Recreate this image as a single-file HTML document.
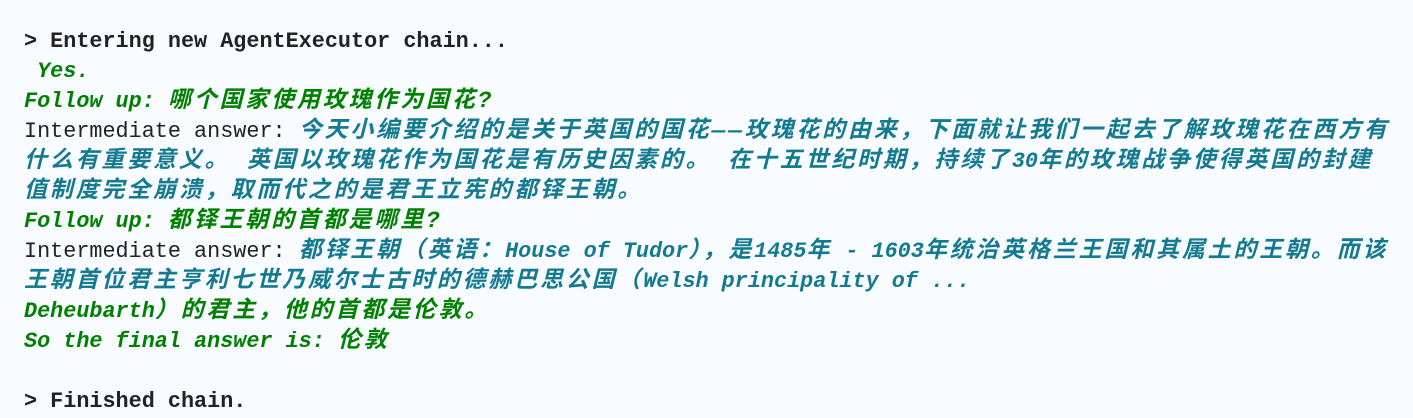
<!DOCTYPE html>
<html><head><meta charset="utf-8"><style>
body{margin:0;background:#f8fbff;width:1413px;height:418px;overflow:hidden}
pre{margin:0;position:absolute;left:24px;top:27px;font-family:"Liberation Mono","Noto Sans CJK SC",monospace;font-size:21.8px;line-height:30px;color:#222;white-space:pre}
.l{display:block;height:30px;line-height:30px;overflow:visible}
.b{font-weight:bold}
.g{color:#008000;font-weight:bold;font-style:italic}
.t{color:#137a90;font-weight:bold;font-style:italic}
.c{font-size:23px;letter-spacing:2.8px;line-height:10px}
</style></head><body><pre><span class="l b">&gt; Entering new AgentExecutor chain...</span><span class="l g"> Yes.</span><span class="l g">Follow up: <span class="c">哪个国家使用玫瑰作为国花?</span></span><span class="l">Intermediate answer: <span class="t"><span class="c">今天小编要介绍的是关于英国的国花——玫瑰花的由来，下面就让我们一起去了解玫瑰花在西方有</span></span></span><span class="l t"><span class="c">什么有重要意义。 英国以玫瑰花作为国花是有历史因素的。 在十五世纪时期，持续了</span>30<span class="c">年的玫瑰战争使得英国的封建</span></span><span class="l t"><span class="c">值制度完全崩溃，取而代之的是君王立宪的都铎王朝。</span></span><span class="l g">Follow up: <span class="c">都铎王朝的首都是哪里?</span></span><span class="l">Intermediate answer: <span class="t"><span class="c">都铎王朝（英语：</span>House of Tudor<span class="c">），是</span>1485<span class="c">年</span> - 1603<span class="c">年统治英格兰王国和其属土的王朝。而该</span></span></span><span class="l t"><span class="c">王朝首位君主亨利七世乃威尔士古时的德赫巴思公国（</span>Welsh principality of ...</span><span class="l g">Deheubarth<span class="c">）的君主，他的首都是伦敦。</span></span><span class="l g">So the final answer is: <span class="c">伦敦</span></span><span class="l"> </span><span class="l b">&gt; Finished chain.</span></pre></body></html>
